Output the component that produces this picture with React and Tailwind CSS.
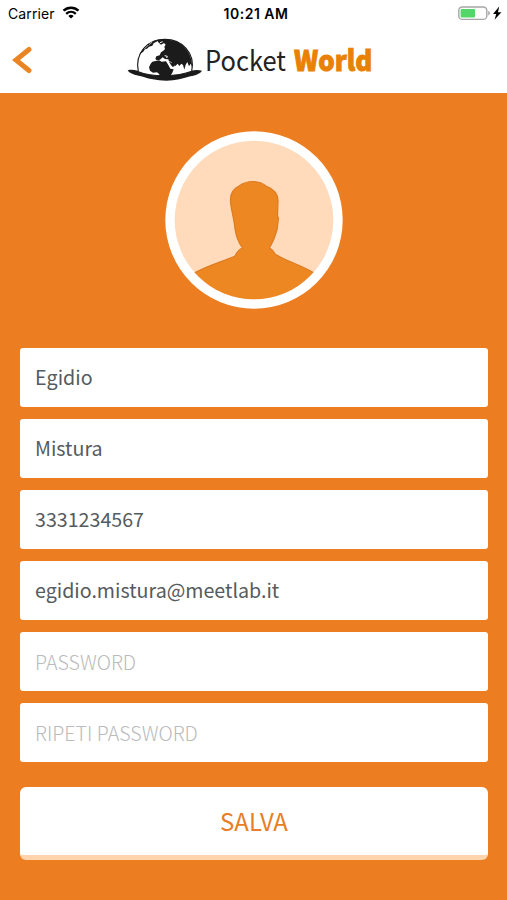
import React, { useState } from "react";

const GlobeLogo = () => (
  <svg viewBox="20 24 228 132" className="w-[76px] h-[44px] shrink-0">
    <path
      d="M22 121 C30 119 40 119 52 122 C90 133 172 133 212 122 C224 119 236 119 245 122 C240 131 226 136 210 139 C190 145 165 152 138 152 C108 152 85 146 62 139 C44 136 28 131 22 121 Z"
      fill="#1b1b1b"
    />
    <path
      d="M54 125 C42 68 84 28 134 28 C184 28 226 68 214 124 C172 141 94 141 54 125 Z"
      fill="#fff"
      stroke="#1b1b1b"
      strokeWidth="3.5"
    />
    {/* Greenland and the north Atlantic */}
    <path
      d="M56 78 C64 54 84 36 112 29 L112 33 L100 40 L96 47 L86 50 L80 56 L74 58 L68 66 L62 70 Z"
      fill="#1b1b1b"
    />
    <path
      d="M96 36 L86 44 M84 45 L72 57"
      stroke="#fff"
      strokeWidth="2"
      fill="none"
    />
    {/* Europe and Asia */}
    <path
      d="M110 30 C130 26 152 29 166 34 C198 47 217 78 215 112 L211 101 L206 109 L201 96 L196 104 L192 119 L188 105 L183 101 L177 108 L172 101 L165 108 L160 106 L153 96 L146 94 L144 88 L134 87 L127 82 L119 89 L110 91 L105 87 L108 79 L118 76 L122 67 L129 62 L134 57 L132 50 L136 44 L131 39 L122 44 L114 37 Z"
      fill="#1b1b1b"
    />
    <path
      d="M133 77 L141 79 L139 84 M119 38 L127 35"
      fill="none"
      stroke="#fff"
      strokeWidth="3"
    />
    {/* Africa and Arabia */}
    <path
      d="M96 95 L116 91 L124 95 L137 94 L144 105 L150 116 L160 118 L156 128 L150 137 L148 148 L118 148 L117 133 L110 127 L98 128 L89 122 L86 112 L91 101 Z"
      fill="#1b1b1b"
    />
    <path
      d="M146 95 L152 105 L157 111 L163 108 L158 100 Z"
      fill="#1b1b1b"
    />
  </svg>
);

const StatusBar = () => (
  <div className="h-7 pl-2 pr-1 flex items-center justify-between text-black font-[Inter,sans-serif]">
    <div className="w-[90px] flex items-center gap-[7px]">
      <span className="text-[14px] leading-none tracking-[0.1px] -mt-px">
        Carrier
      </span>
      <svg
        viewBox="0 0 18 13"
        className="w-[18px] h-[13px] -mt-[3px]"
        fill="none"
      >
        <path
          d="M1.5 4.7 C5.8 0.6 12.2 0.6 16.5 4.7"
          stroke="#000"
          strokeWidth="2.5"
        />
        <path
          d="M4.2 7.8 C7 5.1 11 5.1 13.8 7.8"
          stroke="#000"
          strokeWidth="2.3"
        />
        <path d="M6.3 9.9 C7.9 8.5 10.1 8.5 11.7 9.9 L9 12.6 Z" fill="#000" />
      </svg>
    </div>
    <span className="text-[14px] font-semibold tracking-[0.5px] -mt-px pl-px">
      10:21 AM
    </span>
    <svg viewBox="0 0 45 16" className="w-[45px] h-4 ml-[45px] -mt-[2px]">
      <rect
        x="0.8"
        y="2"
        width="28"
        height="12.4"
        rx="3.5"
        fill="#fff"
        stroke="#a6a6a6"
        strokeWidth="1.4"
      />
      <rect x="2.6" y="3.9" width="14.4" height="8.7" rx="1" fill="#53d769" />
      <path d="M30.2 6 C32.4 6.4 32.4 10 30.2 10.4 Z" fill="#a6a6a6" />
      <path d="M41.2 1.6 L35 8.9 L38.2 8.9 L36.6 14.8 L43.4 7.2 L40 7.2 Z" />
    </svg>
  </div>
);

const Header = () => (
  <div className="h-[65px] relative flex justify-center">
    <button className="absolute left-[12px] top-[18px]" aria-label="Indietro">
      <svg viewBox="0 0 20 28" className="w-5 h-7" fill="none">
        <path
          d="M17 3.500 L4 14 L17 24.500"
          stroke="#e98524"
          strokeWidth="5"
          strokeLinecap="round"
        />
      </svg>
    </button>
    <div className="pt-[10px] pr-[8px] flex">
      <GlobeLogo />
      <div className="h-[41px] flex items-center text-[28px] leading-none whitespace-nowrap pl-[2px]">
        <span className="text-[#222] w-[89px]">
          <span className="inline-block origin-left scale-x-[0.91]">
            Pocket
          </span>
        </span>
        <span className="text-[#e98104] font-black w-[79px]">
          <span className="inline-block origin-left scale-x-[0.925] [-webkit-text-stroke:0.9px_#e98104]">
            World
          </span>
        </span>
      </div>
    </div>
  </div>
);

const Avatar = () => (
  <svg viewBox="0 0 178 178" className="w-[178px] h-[178px]">
    <defs>
      <clipPath id="avatar">
        <circle cx="89" cy="89" r="79.3" />
      </clipPath>
    </defs>
    <circle cx="89" cy="89" r="88.7" fill="#fff" />
    <circle cx="89" cy="89" r="79.3" fill="#ffdabb" />
    <path
      clipPath="url(#avatar)"
      d="M26 144 C40 135 57 131 70 125 C72 121 74 118 77.500 117 C73 111 71 105 70 98 C69 87 66 79 65.500 70 C65 62 68 58 74 55 C82 49 94 49 101 55 C109 58 113.500 63 113 71 L112.500 85 L113.500 87 L112 99 C110 106 108 111 104.500 117 C107 118 109 121 110 123 C122 131 138 134 154 145 L154 178 L26 178 Z"
      fill="#ec8722"
      stroke="#df7c21"
      strokeWidth="1.2"
    />
  </svg>
);

const fields = [
  { name: "nome", type: "text", placeholder: "NOME" },
  { name: "cognome", type: "text", placeholder: "COGNOME" },
  { name: "telefono", type: "tel", placeholder: "TELEFONO" },
  { name: "email", type: "email", placeholder: "EMAIL" },
  { name: "password", type: "password", placeholder: "PASSWORD" },
  { name: "ripeti", type: "password", placeholder: "RIPETI PASSWORD" },
];

const App = () => {
  const [form, setForm] = useState({
    nome: "Egidio",
    cognome: "Mistura",
    telefono: "3331234567",
    email: "egidio.mistura@meetlab.it",
    password: "",
    ripeti: "",
  });

  const handleChange = (e) => {
    setForm({ ...form, [e.target.name]: e.target.value });
  };

  return (
    <div className="w-full h-screen overflow-hidden flex flex-col bg-[#ec7d21] font-['Noto_Sans_CJK_JP',sans-serif]">
      <div className="bg-white">
        <StatusBar />
        <Header />
      </div>

      <div className="pt-[38px] flex justify-center">
        <Avatar />
      </div>

      <form
        onSubmit={(e) => e.preventDefault()}
        className="mt-[39px] pl-5 pr-[19px] flex flex-col gap-3"
      >
        {fields.map((f) => (
          <input
            key={f.name}
            name={f.name}
            type={f.type}
            placeholder={f.placeholder}
            value={form[f.name]}
            onChange={handleChange}
            className="w-full h-[59px] px-[15px] pb-[3px] placeholder-shown:pb-px rounded-[3px] bg-white text-[19.65px] text-[#555b5e] placeholder:text-[#b9bbbc] placeholder:font-light outline-none"
          />
        ))}

        <button
          type="submit"
          className="mt-[13px] h-[73px] rounded-md bg-white border-b-[5px] border-[#ffd3ac] text-[24px] leading-none text-[#e87e25]"
        >
          SALVA
        </button>
      </form>
    </div>
  );
};

export default App;
